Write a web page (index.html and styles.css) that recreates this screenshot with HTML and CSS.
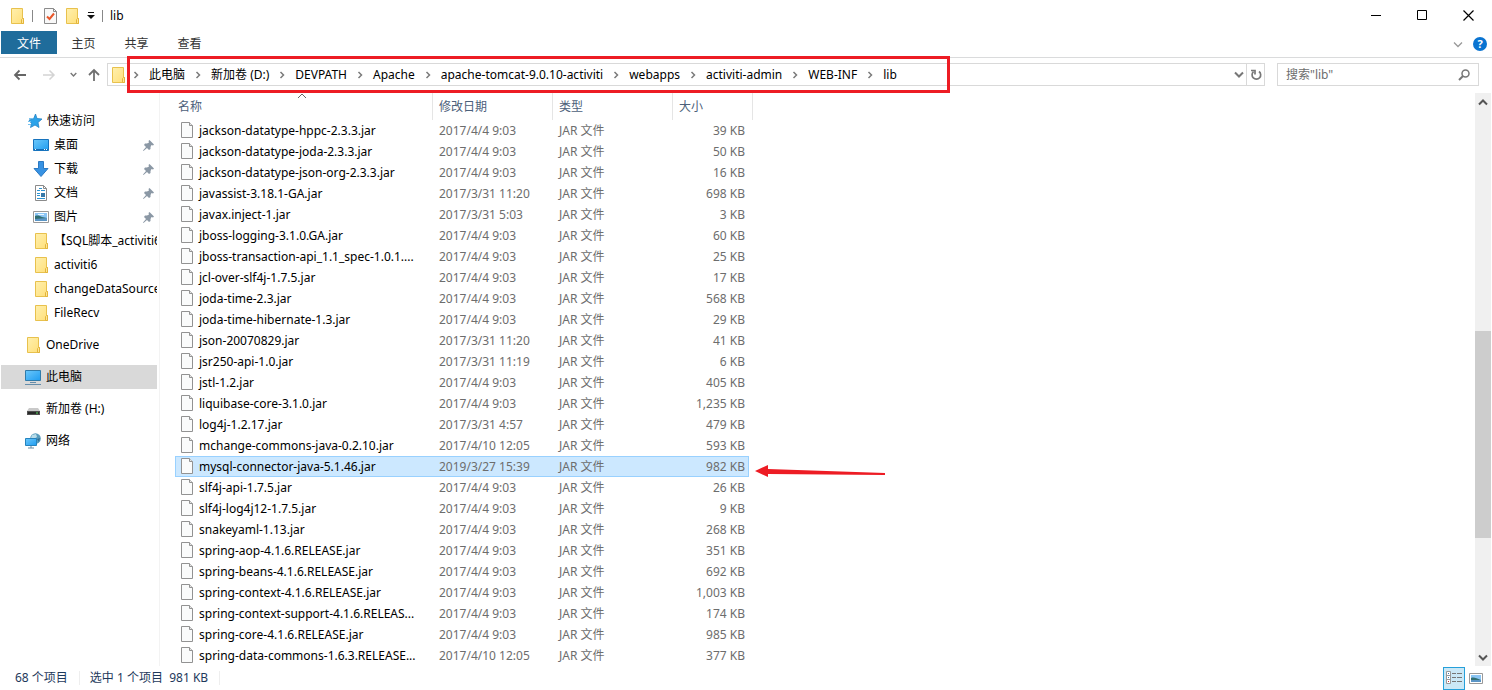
FILE: index.html
```html
<!DOCTYPE html>
<html lang="zh-CN">
<head>
<meta charset="utf-8">
<title>lib</title>
<link rel="stylesheet" href="styles.css">
</head>
<body>
<svg class="sprite" aria-hidden="true">
  <defs>
    <linearGradient id="gold" x1="0" y1="0" x2="1" y2="1"><stop offset="0" stop-color="#fff0ae"/><stop offset="1" stop-color="#ffdf79"/></linearGradient>
    <linearGradient id="blue" x1="0" y1="0" x2="1" y2="1"><stop offset="0" stop-color="#6cc8fb"/><stop offset="1" stop-color="#1f9cf0"/></linearGradient>
    <symbol id="folder" viewBox="0 0 14 16"><path d="M.5.5h11v10h1v5H.5z" fill="url(#gold)" stroke="#e8c14d"/><path d="M10.500 15.500v-4l1-1h1v5z" fill="#ffe695" stroke="#e3b53c"/></symbol>
    <symbol id="file" viewBox="0 0 12 16"><path d="M.5.5h8l3 3v12H.5z" fill="#fafbfb" stroke="#929292"/><path d="M8.500.5v3h3" fill="#e6e6e6" stroke="#929292"/></symbol>
    <symbol id="pin" viewBox="0 0 11 11"><path d="M6.500 0 11 4.500 10 5.500 8.500 5 7.500 7v2L6 10 4 8 .5 11 0 10.500 3 7 1 5l1-1.500h2L6 2.500 5.500 1z" fill="#8b98a5"/></symbol>
    <symbol id="crumb" viewBox="0 0 6 8"><path d="M1.500 1 4.500 4l-3 3" fill="none" stroke="#7b7b7b" stroke-width="1.500"/></symbol>
    <symbol id="down" viewBox="0 0 10 7"><path d="M1 1.500l4 4 4-4" fill="none" stroke="currentColor" stroke-width="2"/></symbol>
    <symbol id="thin" viewBox="0 0 10 7"><path d="M1 1.500l4 4 4-4" fill="none" stroke="currentColor" stroke-width="1.300"/></symbol>
    <symbol id="picture" viewBox="0 0 16 12"><path d="M.5.5h15v11H.5z" fill="#fff" stroke="#999"/><path d="M2 2h12v8H2z" fill="#8bc5f4"/><path d="M2 5c3-1 5 0 7 1l5 1v1H2z" fill="#316f72"/><path d="M2 8c4 0 8-1 12-1v3H2z" fill="#5b95c5"/><path d="M5 3h6v1H5z" fill="#e7f5ff"/></symbol>
  </defs>
</svg>
<div class="window">
  <header class="titlebar">
    <svg class="folder"><use href="#folder"/></svg>
    <span class="tick-line"></span>
    <button class="icon-button check" aria-label="属性"><svg width="13" height="16" viewBox="0 0 13 16"><path d="M.5.5h9l3 3v12H.5z" fill="#f8f8f8" stroke="#8b8b8b"/><path d="M9.500.5v3h3" fill="none" stroke="#8b8b8b"/><path d="M3 8.500 5.500 11 10 5.500" fill="none" stroke="#e8562a" stroke-width="2"/></svg></button>
    <button class="icon-button new-folder" aria-label="新建文件夹"><svg class="folder"><use href="#folder"/></svg></button>
    <button class="icon-button customize" aria-label="自定义快速访问工具栏"><svg width="8" height="7" viewBox="0 0 8 7"><path d="M1 0h6v1H1zM0 3h8L4 7z" fill="#111"/></svg></button>
    <span class="tick-line"></span>
    <h1>lib</h1>
    <div class="window-buttons">
      <button aria-label="最小化"><svg width="11" height="11" viewBox="0 0 11 11"><path d="M0 5.500h10" stroke="#000"/></svg></button>
      <button aria-label="最大化"><svg width="11" height="11" viewBox="0 0 11 11"><path d="M.5.5h9v9h-9z" fill="none" stroke="#000"/></svg></button>
      <button aria-label="关闭"><svg width="11" height="11" viewBox="0 0 11 11"><path d="M.5.5l10 10M10.500.5l-10 10" stroke="#000" stroke-width="1.200"/></svg></button>
    </div>
  </header>

  <nav class="ribbon" aria-label="功能区">
    <button class="file-tab">文件</button>
    <button>主页</button>
    <button>共享</button>
    <button>查看</button>
    <div class="ribbon-end">
      <button class="icon-button expand" aria-label="展开功能区"><svg width="10" height="7"><use href="#thin"/></svg></button>
      <button class="help" aria-label="帮助">?</button>
    </div>
  </nav>

  <div class="navbar">
    <div class="history">
      <button class="icon-button" aria-label="后退"><svg width="14" height="12" viewBox="0 0 14 12"><path d="M13 6H2M6.500 1.500 2 6l4.500 4.500" fill="none" stroke="#666" stroke-width="1.800"/></svg></button>
      <button class="icon-button" aria-label="前进"><svg width="14" height="12" viewBox="0 0 14 12"><path d="M1 6h11M7.500 1.500 12 6l-4.500 4.500" fill="none" stroke="#d4d4d4" stroke-width="1.500"/></svg></button>
      <button class="icon-button recent" aria-label="最近浏览的位置"><svg width="7" height="5"><use href="#down"/></svg></button>
      <button class="icon-button" aria-label="上移"><svg width="12" height="14" viewBox="0 0 12 14"><path d="M6 13V2M1 7l5-5 5 5" fill="none" stroke="#707070" stroke-width="1.800"/></svg></button>
    </div>
    <div class="address">
      <svg class="folder"><use href="#folder"/></svg>
      <div class="crumbs">
        <svg class="crumb"><use href="#crumb"/></svg><a href="#">此电脑</a>
        <svg class="crumb"><use href="#crumb"/></svg><a href="#">新加卷 (D:)</a>
        <svg class="crumb"><use href="#crumb"/></svg><a href="#">DEVPATH</a>
        <svg class="crumb"><use href="#crumb"/></svg><a href="#">Apache</a>
        <svg class="crumb"><use href="#crumb"/></svg><a href="#">apache-tomcat-9.0.10-activiti</a>
        <svg class="crumb"><use href="#crumb"/></svg><a href="#">webapps</a>
        <svg class="crumb"><use href="#crumb"/></svg><a href="#">activiti-admin</a>
        <svg class="crumb"><use href="#crumb"/></svg><a href="#">WEB-INF</a>
        <svg class="crumb"><use href="#crumb"/></svg><a href="#">lib</a>
      </div>
      <button class="icon-button open-list" aria-label="以前的位置"><svg width="10" height="7"><use href="#down"/></svg></button>
      <button class="icon-button refresh" aria-label="刷新"><svg width="12" height="12" viewBox="0 0 12 12"><path d="M9 2.500A4.300 4.300 0 1 1 3.500 2.700M1 1.500h4v4" fill="none" stroke="#777" stroke-width="1.700"/></svg></button>
      <div class="highlight"></div>
    </div>
    <div class="search">
      <input type="search" aria-label="搜索" placeholder='搜索"lib"'>
      <svg width="12" height="12" viewBox="0 0 12 12"><circle cx="7.500" cy="4.500" r="3.500" fill="none" stroke="#777" stroke-width="1.500"/><path d="M5 7 1 11" stroke="#777" stroke-width="2"/></svg>
    </div>
  </div>

  <main class="content">
    <aside class="tree">
      <ul>
        <li class="root"><svg width="17" height="14" viewBox="0 0 17 14"><path d="M10.500 0 12 4.500 17 5l-4 3.500 1 5L10 11 5.500 13.500l1-4L4 6l4.500-1z" fill="#2ba3ea" stroke="#2383c5" stroke-width=".8"/><path d="M4 4.500h4M3 7.500h3M3 10.500h3" stroke="#75c2ef"/></svg><a href="#">快速访问</a></li>
        <li><svg width="16" height="12" viewBox="0 0 16 12"><path d="M.5.5h15v11H.5z" fill="url(#blue)" stroke="#1773bd"/><path d="M1 10.500h14" stroke="#156bb3"/><path d="M2 10.500h1m8 0h1m1 0h1" stroke="#fff"/></svg><a href="#">桌面</a><svg class="pin"><use href="#pin"/></svg></li>
        <li><svg width="16" height="16" viewBox="0 0 16 16"><path d="M5.500.5h5v7h4.500L8 15.500 1 7.500h4.500z" fill="#3792e3" stroke="#2b79c2"/></svg><a href="#">下载</a><svg class="pin"><use href="#pin"/></svg></li>
        <li><svg width="16" height="16" viewBox="0 0 16 16"><path d="M2.500.5h8l3 3v12h-11z" fill="#fff" stroke="#8b8b8b"/><path d="M10.500.5v3h3" fill="none" stroke="#8b8b8b"/><path d="M6 3.500h3M4 5.500h3M8 5.500h4M4 8.500h3M4 10.500h3M4 13.500h8" stroke="#2d94d2"/><path d="M8 8h4v4H8z" fill="#3678a8"/></svg><a href="#">文档</a><svg class="pin"><use href="#pin"/></svg></li>
        <li><svg width="16" height="12"><use href="#picture"/></svg><a href="#">图片</a><svg class="pin"><use href="#pin"/></svg></li>
        <li><svg class="folder"><use href="#folder"/></svg><a href="#">【SQL脚本_activiti6</a></li>
        <li><svg class="folder"><use href="#folder"/></svg><a href="#">activiti6</a></li>
        <li><svg class="folder"><use href="#folder"/></svg><a href="#">changeDataSource</a></li>
        <li><svg class="folder"><use href="#folder"/></svg><a href="#">FileRecv</a></li>
        <li class="root group"><svg class="folder"><use href="#folder"/></svg><a href="#">OneDrive</a></li>
        <li class="root group current"><svg width="16" height="15" viewBox="0 0 16 15"><path d="M.5.5h15v10H.5z" fill="url(#blue)" stroke="#307baa"/><path d="M5 12.500h6M0 14.500h16" stroke="#668daa"/></svg><a href="#" aria-current="true">此电脑</a></li>
        <li class="root group"><svg width="16" height="14" viewBox="0 0 16 14"><path d="M4 6h9l2 3H2z" fill="#c9c9c9"/><path d="M2 9h13v4H2z" fill="#505050"/><path d="M3 10h11v2H3z" fill="#282828"/><path d="M11 11h2" stroke="#56e05f" stroke-width="1"/></svg><a href="#">新加卷 (H:)</a></li>
        <li class="root group"><svg width="16" height="16" viewBox="0 0 16 16"><circle cx="10.500" cy="5.500" r="5.300" fill="#5a9cbc"/><path d="M7 2l4-1 1 3-3 2-3-1z" fill="#b8dce9"/><path d="M12 6l3-1-1 4z" fill="#2f6e95"/><path d="M.5 5.500h11v7H.5z" fill="url(#blue)" stroke="#2583bd"/><path d="M3 15h6M6 13v2" stroke="#698ca3"/></svg><a href="#">网络</a></li>
      </ul>
    </aside>
    <section class="files">
      <table>
        <thead><tr><th scope="col">名称<svg class="sort" width="10" height="6" viewBox="0 0 10 6"><path d="M1 5l4-4 4 4" fill="none" stroke="#666"/></svg></th><th scope="col">修改日期</th><th scope="col">类型</th><th scope="col">大小</th></tr></thead>
        <tbody>
          <tr><td><svg class="file"><use href="#file"/></svg><span>jackson-datatype-hppc-2.3.3.jar</span></td><td>2017/4/4 9:03</td><td>JAR 文件</td><td>39 KB</td></tr>
          <tr><td><svg class="file"><use href="#file"/></svg><span>jackson-datatype-joda-2.3.3.jar</span></td><td>2017/4/4 9:03</td><td>JAR 文件</td><td>50 KB</td></tr>
          <tr><td><svg class="file"><use href="#file"/></svg><span>jackson-datatype-json-org-2.3.3.jar</span></td><td>2017/4/4 9:03</td><td>JAR 文件</td><td>16 KB</td></tr>
          <tr><td><svg class="file"><use href="#file"/></svg><span>javassist-3.18.1-GA.jar</span></td><td>2017/3/31 11:20</td><td>JAR 文件</td><td>698 KB</td></tr>
          <tr><td><svg class="file"><use href="#file"/></svg><span>javax.inject-1.jar</span></td><td>2017/3/31 5:03</td><td>JAR 文件</td><td>3 KB</td></tr>
          <tr><td><svg class="file"><use href="#file"/></svg><span>jboss-logging-3.1.0.GA.jar</span></td><td>2017/4/4 9:03</td><td>JAR 文件</td><td>60 KB</td></tr>
          <tr><td><svg class="file"><use href="#file"/></svg><span>jboss-transaction-api_1.1_spec-1.0.1....</span></td><td>2017/4/4 9:03</td><td>JAR 文件</td><td>25 KB</td></tr>
          <tr><td><svg class="file"><use href="#file"/></svg><span>jcl-over-slf4j-1.7.5.jar</span></td><td>2017/4/4 9:03</td><td>JAR 文件</td><td>17 KB</td></tr>
          <tr><td><svg class="file"><use href="#file"/></svg><span>joda-time-2.3.jar</span></td><td>2017/4/4 9:03</td><td>JAR 文件</td><td>568 KB</td></tr>
          <tr><td><svg class="file"><use href="#file"/></svg><span>joda-time-hibernate-1.3.jar</span></td><td>2017/4/4 9:03</td><td>JAR 文件</td><td>29 KB</td></tr>
          <tr><td><svg class="file"><use href="#file"/></svg><span>json-20070829.jar</span></td><td>2017/3/31 11:20</td><td>JAR 文件</td><td>41 KB</td></tr>
          <tr><td><svg class="file"><use href="#file"/></svg><span>jsr250-api-1.0.jar</span></td><td>2017/3/31 11:19</td><td>JAR 文件</td><td>6 KB</td></tr>
          <tr><td><svg class="file"><use href="#file"/></svg><span>jstl-1.2.jar</span></td><td>2017/4/4 9:03</td><td>JAR 文件</td><td>405 KB</td></tr>
          <tr><td><svg class="file"><use href="#file"/></svg><span>liquibase-core-3.1.0.jar</span></td><td>2017/4/4 9:03</td><td>JAR 文件</td><td>1,235 KB</td></tr>
          <tr><td><svg class="file"><use href="#file"/></svg><span>log4j-1.2.17.jar</span></td><td>2017/3/31 4:57</td><td>JAR 文件</td><td>479 KB</td></tr>
          <tr><td><svg class="file"><use href="#file"/></svg><span>mchange-commons-java-0.2.10.jar</span></td><td>2017/4/10 12:05</td><td>JAR 文件</td><td>593 KB</td></tr>
          <tr class="selected" aria-selected="true"><td><svg class="file"><use href="#file"/></svg><span>mysql-connector-java-5.1.46.jar</span></td><td>2019/3/27 15:39</td><td>JAR 文件</td><td>982 KB<svg class="arrow" width="131" height="14" viewBox="0 0 131 14"><path d="M0 7 13 1v4l117 4v2L13 10v3z" fill="#ed1c24"/></svg></td></tr>
          <tr><td><svg class="file"><use href="#file"/></svg><span>slf4j-api-1.7.5.jar</span></td><td>2017/4/4 9:03</td><td>JAR 文件</td><td>26 KB</td></tr>
          <tr><td><svg class="file"><use href="#file"/></svg><span>slf4j-log4j12-1.7.5.jar</span></td><td>2017/4/4 9:03</td><td>JAR 文件</td><td>9 KB</td></tr>
          <tr><td><svg class="file"><use href="#file"/></svg><span>snakeyaml-1.13.jar</span></td><td>2017/4/4 9:03</td><td>JAR 文件</td><td>268 KB</td></tr>
          <tr><td><svg class="file"><use href="#file"/></svg><span>spring-aop-4.1.6.RELEASE.jar</span></td><td>2017/4/4 9:03</td><td>JAR 文件</td><td>351 KB</td></tr>
          <tr><td><svg class="file"><use href="#file"/></svg><span>spring-beans-4.1.6.RELEASE.jar</span></td><td>2017/4/4 9:03</td><td>JAR 文件</td><td>692 KB</td></tr>
          <tr><td><svg class="file"><use href="#file"/></svg><span>spring-context-4.1.6.RELEASE.jar</span></td><td>2017/4/4 9:03</td><td>JAR 文件</td><td>1,003 KB</td></tr>
          <tr><td><svg class="file"><use href="#file"/></svg><span>spring-context-support-4.1.6.RELEAS...</span></td><td>2017/4/4 9:03</td><td>JAR 文件</td><td>174 KB</td></tr>
          <tr><td><svg class="file"><use href="#file"/></svg><span>spring-core-4.1.6.RELEASE.jar</span></td><td>2017/4/4 9:03</td><td>JAR 文件</td><td>985 KB</td></tr>
          <tr><td><svg class="file"><use href="#file"/></svg><span>spring-data-commons-1.6.3.RELEASE...</span></td><td>2017/4/10 12:05</td><td>JAR 文件</td><td>377 KB</td></tr>
        </tbody>
      </table>
    </section>
    <div class="scrollbar">
      <svg width="10" height="7" class="flip"><use href="#down"/></svg>
      <div class="track"><div class="thumb"></div></div>
      <svg width="10" height="7"><use href="#down"/></svg>
    </div>
  </main>

  <footer class="status">
    <span>68 个项目</span>
    <span>选中 1 个项目&nbsp; 981 KB</span>
    <div class="views">
      <button class="active" aria-label="详细信息" aria-pressed="true"><svg width="16" height="14" viewBox="0 0 16 14"><path d="M.5.5h4v12h-4zM.5 4.500h4M.5 8.500h4" fill="#fff" stroke="#999"/><path d="M2 2.500h1M2 6.500h1" stroke="#3779b8"/><path d="M2 10.500h1" stroke="#c33"/><path d="M6 2.500h4m1 0h5M6 6.500h4m1 0h5M6 10.500h4m1 0h5" stroke="#777"/></svg></button>
      <button aria-label="大缩略图"><svg width="14" height="11" viewBox="0 0 14 11"><path d="M.5.5h13v10H.5z" fill="#fff" stroke="#999"/><path d="M2 2h10v7H2z" fill="#8bc5f4"/><path d="M2 5c3-1 5 0 10 2H2z" fill="#316f72"/><path d="M2 7h10v2H2z" fill="#5b95c5"/></svg></button>
    </div>
  </footer>
</div>
</body>
</html>
```

FILE: styles.css
```css
* { box-sizing: border-box; }

body {
  margin: 0;
  background: #fff;
  color: #000;
  font: 12px/20px "Noto Sans", "Noto Sans CJK SC", sans-serif;
}

button, input { font: inherit; }

button {
  display: flex;
  align-items: center;
  justify-content: center;
  padding: 0;
  border: 0;
  background: none;
  color: inherit;
}

a { color: inherit; text-decoration: none; }
svg { display: block; flex: none; }
.sprite { position: absolute; width: 0; height: 0; }
.folder { width: 14px; height: 16px; }

.window {
  display: flex;
  flex-direction: column;
  min-height: 100vh;
}

/* Title bar */
.titlebar {
  display: flex;
  align-items: center;
  height: 31px;
  padding: 0 1px 0 11px;
}

.tick-line { width: 1px; height: 12px; margin-left: 7px; background: #888; }
.check { margin-left: 11px; }
.new-folder { margin-left: 9px; }
.customize { margin-left: 7px; }
.titlebar h1 { margin: 0 0 0 7px; font-size: 12px; font-weight: 400; }
.window-buttons { display: flex; margin-left: auto; }
.window-buttons button { width: 46px; height: 30px; }

/* Ribbon */
.ribbon {
  display: flex;
  height: 27px;
  padding-left: 1px;
  border-bottom: 1px solid #dadbdc;
  color: #333;
}

.ribbon > button { width: 53px; height: 23px; padding-top: 2px; }
.ribbon > .file-tab { width: 56px; background: #1f6c9b; color: #fff; }
.ribbon-end { display: flex; align-items: center; gap: 10px; margin-left: auto; padding-right: 5px; }
.expand { color: #999; }

.help {
  width: 14px;
  height: 14px;
  border-radius: 50%;
  background: #0a74d1;
  color: #fff;
  font-size: 11px;
  font-weight: 700;
}

/* Navigation */
.navbar {
  display: flex;
  align-items: flex-start;
  height: 35px;
  padding: 5px 13px 0 13px;
}

.history { display: flex; align-items: center; gap: 15px; width: 94px; height: 23px; }
.history .recent { margin: 0 -4px 0 -1px; color: #777; }

.address {
  position: relative;
  display: flex;
  align-items: center;
  flex: 1;
  height: 23px;
  padding-left: 4px;
  border: 1px solid #d9d9d9;
}

.crumbs { display: flex; align-items: center; gap: 10px; flex: 1; padding-left: 7px; white-space: nowrap; }
.crumb { width: 6px; height: 8px; }
.open-list { width: 14px; height: 21px; color: #777; }
.refresh { width: 18px; height: 21px; border-left: 1px solid #d9d9d9; }

.highlight {
  position: absolute;
  top: -8px;
  left: 19px;
  width: 823px;
  height: 37px;
  border: 3px solid #ed1c24;
  pointer-events: none;
}

.search {
  display: flex;
  align-items: center;
  width: 202px;
  height: 23px;
  margin-left: 12px;
  padding: 0 8px;
  border: 1px solid #d9d9d9;
}

.search input { flex: 1; min-width: 0; padding: 0; border: 0; outline: 0; background: none; }
.search input::placeholder { color: #6d6d6d; opacity: 1; }

/* Folder tree */
.content { display: flex; flex: 1; }
.tree { width: 160px; padding: 16px 2px 0 1px; border-right: 1px solid #f3f3f3; }
.tree ul { margin: 0; padding: 0; list-style: none; }

.tree li {
  display: flex;
  align-items: center;
  gap: 5px;
  height: 24px;
  padding: 0 3px 0 32px;
  overflow: hidden;
  white-space: nowrap;
}

.tree li:not(:has(.pin)) { padding-right: 0; }
.tree li.root { padding-left: 24px; }
.tree li.group { margin-top: 8px; }
.tree li.current { background: #d9d9d9; }
.tree .folder { margin-left: 2px; }
.tree a { flex: 1; min-width: 0; overflow: hidden; }
.pin { width: 11px; height: 11px; }

/* File list */
.files { flex: 1; padding-left: 15px; }
.files table { display: block; width: 578px; }
.files thead, .files tbody { display: block; }
.files tr { display: grid; grid-template-columns: 258px 120px 120px 1fr; }

.files th {
  position: relative;
  height: 27px;
  padding: 4px 0 0 6px;
  border-right: 1px solid #e5e5e5;
  color: #4c607a;
  font-weight: 400;
  text-align: left;
}

.files th:first-child { padding-left: 3px; }
.sort { position: absolute; top: 0; left: 122px; }
.files tbody tr { height: 21px; margin-right: 4px; }
.files td { padding: 1px 0 0 6px; color: #6d6d6d; white-space: nowrap; }

.files td:first-child {
  display: flex;
  gap: 6px;
  color: #000;
}

.files td:last-child { padding-right: 4px; text-align: right; }
.file { width: 12px; height: 16px; margin-top: 1px; }

.files .selected {
  position: relative;
  background: #cce8ff;
  box-shadow: inset 0 0 0 1px #99d1ff;
}

.arrow { position: absolute; top: 8px; left: calc(100% + 6px); }

/* Scrollbar */
.scrollbar {
  display: flex;
  flex-direction: column;
  align-items: center;
  width: 16px;
  margin-right: 1px;
  padding: 6px 0 5px;
  background: #f0f0f0;
  color: #555;
}

.track { flex: 1; align-self: stretch; display: flex; flex-direction: column; padding: 225px 0 116px; }
.thumb { flex: 1; background: #cdcdcd; }
.flip { transform: rotate(180deg); }

/* Status bar */
.status {
  display: flex;
  align-items: center;
  height: 24px;
  padding: 0 5px 0 15px;
  color: #1e395b;
}

.status span { padding-right: 11px; border-right: 1px solid #eee; line-height: 14px; }
.status span + span { padding-left: 10px; }
.views { display: flex; margin-left: auto; }
.views button { width: 22px; height: 23px; }
.views .active { border: 1px solid #26a0da; background: #cbe8f6; }
```
